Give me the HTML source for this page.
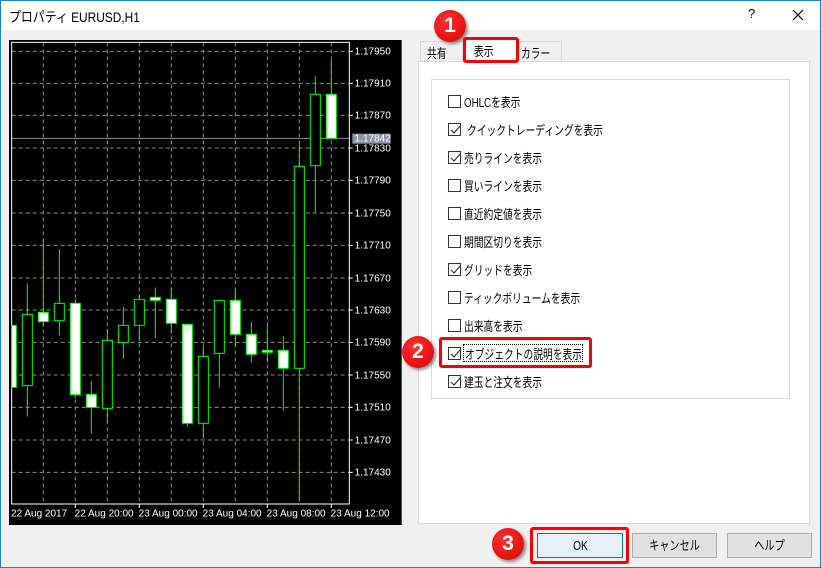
<!DOCTYPE html>
<html><head><meta charset="utf-8"><style>
*{margin:0;padding:0;box-sizing:border-box}
body{width:821px;height:568px;overflow:hidden;background:#f0f0f0;font-family:"Liberation Sans","Noto Sans CJK JP",sans-serif;position:relative}
.win{position:absolute;left:0;top:0;width:821px;height:568px;border:1px solid #1883d7;}
.title{position:absolute;left:1px;top:1px;width:819px;height:29px;background:#fff}
.abs{position:absolute}
.t{font-size:13px;color:#000;white-space:nowrap}
.j{transform:scaleX(0.75);transform-origin:0 0}
.cb{position:absolute;width:13px;height:13px;border:1px solid #333;background:#fff}
.cb svg{position:absolute;left:0;top:0}
.circ{position:absolute;width:32px;height:32px;border-radius:50%;background:radial-gradient(circle at 40% 35%,#ff3030,#d80000);color:#fff;font-size:21px;font-weight:bold;text-align:center;line-height:32px;box-shadow:2px 2px 3px rgba(0,0,0,.45)}
.red{position:absolute;border:3px solid #f00;border-radius:3px}
.btn{position:absolute;height:25px;border:1px solid #adadad;background:#e1e1e1;font-size:13px;text-align:center;line-height:23px}
.btn span{display:inline-block;transform:scaleX(0.78)}
</style></head><body>
<div class="win"></div>
<div class="title"></div>
<div class="abs t j" style="left:9px;top:7px;font-size:14px;transform:scaleX(0.85)">プロパティ EURUSD,H1</div>
<div class="abs t" style="left:748px;top:6px;font-size:13px">?</div>
<svg class="abs" style="left:792px;top:9px" width="12" height="12"><path d="M1 1L11 11M11 1L1 11" stroke="#000" stroke-width="1.2"/></svg>

<svg class="abs" style="left:0;top:30px" width="410" height="500" viewBox="0 0 1230 1500">
<rect x="27" y="30" width="1178" height="1455" fill="#000"/>
<g stroke="#8a8a8a" stroke-width="3" stroke-dasharray="12,9">
<path d="M35 64H1048M35 160H1048M35 256H1048M35 354H1048M35 451H1048M35 549H1048M35 646H1048M35 744H1048M35 840H1048M35 937H1048M35 1035H1048M35 1132H1048M35 1230H1048M35 1327H1048"/>
<path d="M130 37V1422M226 37V1422M322 37V1422M418 37V1422M514 37V1422M610 37V1422M706 37V1422M802 37V1422M898 37V1422M994 37V1422"/>
</g>
<path d="M35 325H1048" stroke="#8090a0" stroke-width="3"/>
<rect x="35" y="37" width="1013" height="1385" fill="none" stroke="#fff" stroke-width="3"/>
<g stroke="#fff" stroke-width="3"><path d="M1048 64h10M1048 160h10M1048 256h10M1048 354h10M1048 451h10M1048 549h10M1048 646h10M1048 744h10M1048 840h10M1048 937h10M1048 1035h10M1048 1132h10M1048 1230h10M1048 1327h10M226 1422v12M418 1422v12M610 1422v12M802 1422v12M994 1422v12"/></g>
<g stroke="#00ff00" stroke-width="3">
<path d="M82 760V1160M130 630V890M178 657V917M226 808V1105M274 1053V1211M322 897V1178M370 831V987M418 793V933M466 773V923M514 773V908M562 883V1190M610 950V1221M658 808V1073M706 775V950M754 876V998M802 883V998M850 918V1142M898 340V1412M946 138V550M994 90V325"/>
<rect x="35" y="886" width="14" height="186" fill="#fff"/>
<rect x="67" y="853" width="30" height="214" fill="#000"/>
<rect x="115" y="847" width="30" height="28" fill="#fff"/>
<rect x="163" y="820" width="30" height="52" fill="#000"/>
<rect x="211" y="820" width="30" height="274" fill="#fff"/>
<rect x="259" y="1093" width="30" height="39" fill="#fff"/>
<rect x="307" y="931" width="30" height="204" fill="#000"/>
<rect x="355" y="886" width="30" height="51" fill="#000"/>
<rect x="403" y="808" width="30" height="78" fill="#000"/>
<rect x="451" y="802" width="30" height="9" fill="#fff"/>
<rect x="499" y="808" width="30" height="72" fill="#fff"/>
<rect x="547" y="883" width="30" height="297" fill="#fff"/>
<rect x="595" y="979" width="30" height="201" fill="#000"/>
<rect x="643" y="811" width="30" height="159" fill="#000"/>
<rect x="691" y="811" width="30" height="102" fill="#fff"/>
<rect x="739" y="913" width="30" height="60" fill="#fff"/>
<rect x="787" y="961" width="30" height="6" fill="#fff"/>
<rect x="835" y="961" width="30" height="54" fill="#fff"/>
<rect x="883" y="409" width="30" height="606" fill="#000"/>
<rect x="931" y="193" width="30" height="214" fill="#000"/>
<rect x="979" y="193" width="30" height="132" fill="#fff"/>
</g>
<rect x="1057" y="311" width="115" height="30" fill="#8a96a3"/>
<g fill="#fff" font-family="Liberation Sans, sans-serif" font-size="30">
<text x="1064" y="74">1.17950</text><text x="1064" y="170">1.17910</text><text x="1064" y="266">1.17870</text><text x="1064" y="335">1.17842</text><text x="1064" y="364">1.17830</text><text x="1064" y="461">1.17790</text><text x="1064" y="559">1.17750</text><text x="1064" y="656">1.17710</text><text x="1064" y="754">1.17670</text><text x="1064" y="850">1.17630</text><text x="1064" y="947">1.17590</text><text x="1064" y="1045">1.17550</text><text x="1064" y="1142">1.17510</text><text x="1064" y="1240">1.17470</text><text x="1064" y="1337">1.17430</text>
<text x="33" y="1460">22 Aug 2017</text><text x="224" y="1460">22 Aug 20:00</text><text x="416" y="1460">23 Aug 00:00</text><text x="608" y="1460">23 Aug 04:00</text><text x="800" y="1460">23 Aug 08:00</text><text x="992" y="1460">23 Aug 12:00</text>
</g>
</svg>

<div class="abs" style="left:420px;top:41px;width:43px;height:21px;border:1px solid #d9d9d9;border-bottom:none;background:#f0f0f0"></div>
<div class="abs t j" style="left:427px;top:43px">共有</div>
<div class="abs" style="left:519px;top:41px;width:43px;height:21px;border:1px solid #d9d9d9;border-bottom:none;background:#f0f0f0"></div>
<div class="abs t j" style="left:521px;top:43px">カラー</div>
<div class="abs" style="left:418px;top:61px;width:392px;height:463px;background:#fff;border:1px solid #d9d9d9"></div>
<div class="abs" style="left:465px;top:38px;width:52px;height:25px;background:#fff"></div>
<div class="abs t j" style="left:474px;top:41px">表示</div>
<div class="abs" style="left:431px;top:79px;width:359px;height:320px;border:1px solid #dcdcdc"></div>

<div class="cb" style="left:448px;top:95px"></div><div class="abs t j" style="left:464px;top:92px">OHLCを表示</div>
<div class="cb" style="left:448px;top:123px"><svg width="12" height="12"><path d="M2 6l3 3 6-7" stroke="#333" fill="none" stroke-width="1.2"/></svg></div><div class="abs t j" style="left:467px;top:120px">クイックトレーディングを表示</div>
<div class="cb" style="left:448px;top:151px"><svg width="12" height="12"><path d="M2 6l3 3 6-7" stroke="#333" fill="none" stroke-width="1.2"/></svg></div><div class="abs t j" style="left:464px;top:148px">売りラインを表示</div>
<div class="cb" style="left:448px;top:179px"></div><div class="abs t j" style="left:464px;top:176px">買いラインを表示</div>
<div class="cb" style="left:448px;top:207px"></div><div class="abs t j" style="left:464px;top:204px">直近約定値を表示</div>
<div class="cb" style="left:448px;top:235px"></div><div class="abs t j" style="left:464px;top:232px">期間区切りを表示</div>
<div class="cb" style="left:448px;top:263px"><svg width="12" height="12"><path d="M2 6l3 3 6-7" stroke="#333" fill="none" stroke-width="1.2"/></svg></div><div class="abs t j" style="left:464px;top:260px">グリッドを表示</div>
<div class="cb" style="left:448px;top:291px"></div><div class="abs t j" style="left:464px;top:288px">ティックボリュームを表示</div>
<div class="cb" style="left:448px;top:319px"></div><div class="abs t j" style="left:464px;top:316px">出来高を表示</div>
<div class="cb" style="left:448px;top:347px"><svg width="12" height="12"><path d="M2 6l3 3 6-7" stroke="#333" fill="none" stroke-width="1.2"/></svg></div><div class="abs" style="left:463px;top:344px;width:120px;height:18px;border:1px dotted #000"></div><div class="abs t j" style="left:465px;top:344px">オブジェクトの説明を表示</div>
<div class="cb" style="left:448px;top:375px"><svg width="12" height="12"><path d="M2 6l3 3 6-7" stroke="#333" fill="none" stroke-width="1.2"/></svg></div><div class="abs t j" style="left:464px;top:372px">建玉と注文を表示</div>

<div class="btn" style="left:537px;top:533px;width:86px;background:#e5f1fb;border-color:#0078d7"><span>OK</span></div>
<div class="btn" style="left:632px;top:533px;width:85px"><span>キャンセル</span></div>
<div class="btn" style="left:727px;top:533px;width:85px"><span>ヘルプ</span></div>

<div class="red" style="left:463px;top:37px;width:56px;height:26px"></div>
<div class="red" style="left:439px;top:337px;width:153px;height:31px"></div>
<div class="red" style="left:530px;top:527px;width:99px;height:37px"></div>
<div class="circ" style="left:434px;top:10px">1</div>
<div class="circ" style="left:402px;top:336px">2</div>
<div class="circ" style="left:492px;top:528px">3</div>
</body></html>
